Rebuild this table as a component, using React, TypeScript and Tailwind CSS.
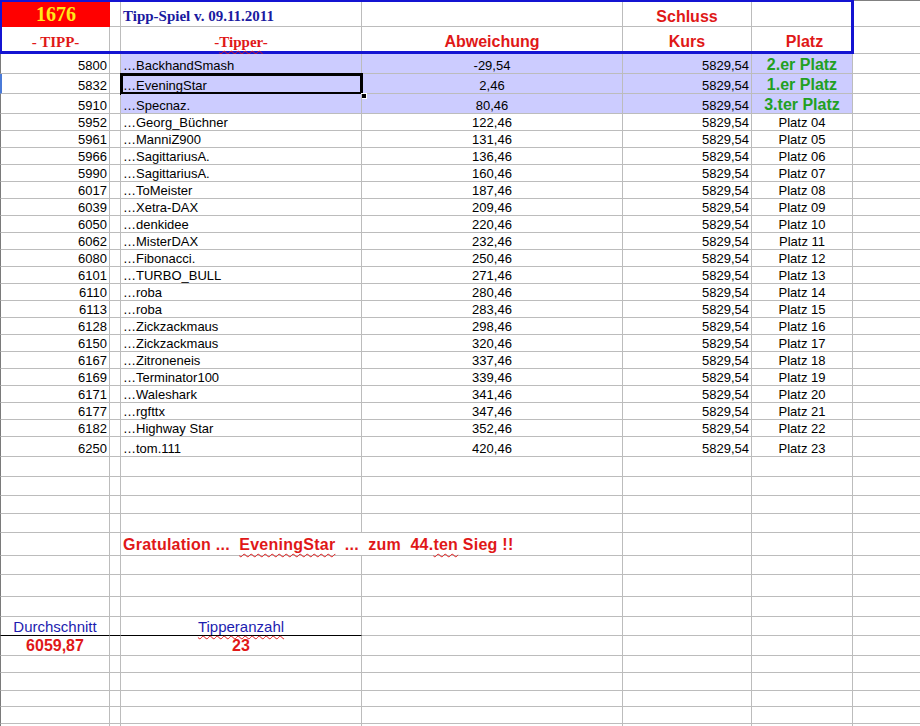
import React from "react";

const SANS = "font-['Liberation_Sans',Arial,sans-serif]";
const SERIF = "font-['Liberation_Serif','Times_New_Roman',serif]";

const tipps: [number, string, string][] = [
  [5800, "BackhandSmash", "-29,54"],
  [5832, "EveningStar", "2,46"],
  [5910, "Specnaz.", "80,46"],
  [5952, "Georg_Büchner", "122,46"],
  [5961, "ManniZ900", "131,46"],
  [5966, "SagittariusA.", "136,46"],
  [5990, "SagittariusA.", "160,46"],
  [6017, "ToMeister", "187,46"],
  [6039, "Xetra-DAX", "209,46"],
  [6050, "denkidee", "220,46"],
  [6062, "MisterDAX", "232,46"],
  [6080, "Fibonacci.", "250,46"],
  [6101, "TURBO_BULL", "271,46"],
  [6110, "roba", "280,46"],
  [6113, "roba", "283,46"],
  [6128, "Zickzackmaus", "298,46"],
  [6150, "Zickzackmaus", "320,46"],
  [6167, "Zitroneneis", "337,46"],
  [6169, "Terminator100", "339,46"],
  [6171, "Waleshark", "341,46"],
  [6177, "rgfttx", "347,46"],
  [6182, "Highway Star", "352,46"],
  [6250, "tom.111", "420,46"],
];

const winners = ["2.er Platz", "1.er Platz", "3.ter Platz"];

const Cell = ({
  w,
  className = "",
  children,
}: {
  w: string;
  className?: string;
  children?: React.ReactNode;
}) => (
  <div
    className={`${w} h-full shrink-0 border-r border-b border-[#bcbcbc] flex items-end whitespace-nowrap ${className}`}
  >
    {children}
  </div>
);

const EmptyRow = ({ h }: { h: string }) => (
  <div className={`flex ${h}`}>
    <Cell w="w-[110px]" className="border-l border-l-[#7a7a7a]" />
    <Cell w="w-[11px]" />
    <Cell w="w-[241px]" />
    <Cell w="w-[261px]" />
    <Cell w="w-[129px]" />
    <Cell w="w-[101px]" />
    <div className="flex-1 h-full border-b border-[#bcbcbc]" />
  </div>
);

const wavy = "underline decoration-wavy decoration-[#e01818] decoration-1 underline-offset-[3px]";

export default function App() {
  return (
    <div className={`w-[920px] h-[726px] overflow-hidden bg-white text-black ${SANS}`}>
      {/* Header block with blue frame */}
      <div className="flex h-[54px]">
        <div className="w-[854px] h-full shrink-0 border-t-2 border-l-2 border-r-[3px] border-b-[3px] border-[#1414d2] flex flex-col">
          <div className="flex h-[25px]">
            <div className="w-[108px] h-full shrink-0 bg-[#ff0000] flex items-center justify-center pb-[1px]">
              <span className={`${SERIF} font-bold text-[20px] leading-none text-[#ffe81a]`}>1676</span>
            </div>
            <Cell w="w-[11px]" />
            <Cell w="w-[241px]" className="pl-[2px] pb-[1px]">
              <span className={`${SERIF} font-bold text-[15px] leading-[18px] text-[#1a1aa0]`}>
                Tipp-Spiel v. 09.11.2011
              </span>
            </Cell>
            <Cell w="w-[261px]" />
            <Cell w="w-[129px]" className="justify-center">
              <span className="font-bold text-[16px] leading-[18px] text-[#e01818]">Schluss</span>
            </Cell>
            <div className="flex-1 h-full border-b border-[#bcbcbc]" />
          </div>
          <div className="flex flex-1">
            <div className="w-[108px] h-full shrink-0 border-r border-[#bcbcbc] flex items-end justify-center">
              <span className={`${SERIF} font-bold text-[15px] leading-[18px] text-[#e01818]`}>- TIPP-</span>
            </div>
            <div className="w-[11px] h-full shrink-0 border-r border-[#bcbcbc]" />
            <div className="w-[241px] h-full shrink-0 border-r border-[#bcbcbc] flex items-end justify-center">
              <span className={`${SERIF} font-bold text-[15px] leading-[18px] text-[#e01818]`}>
                -<span className={wavy}>Tipper</span>-
              </span>
            </div>
            <div className="w-[261px] h-full shrink-0 border-r border-[#bcbcbc] flex items-end justify-center">
              <span className="font-bold text-[16px] leading-[18px] text-[#e01818]">Abweichung</span>
            </div>
            <div className="w-[129px] h-full shrink-0 border-r border-[#bcbcbc] flex items-end justify-center">
              <span className="font-bold text-[16px] leading-[18px] text-[#e01818]">Kurs</span>
            </div>
            <div className="flex-1 h-full flex items-end justify-center pl-[6px]">
              <span className="font-bold text-[16px] leading-[18px] text-[#e01818]">Platz</span>
            </div>
          </div>
        </div>
        <div className="flex-1 flex flex-col border-t border-[#808080]">
          <div className="h-[26px] border-b border-[#bcbcbc]" />
          <div className="flex-1 border-b border-[#bcbcbc]" />
        </div>
      </div>

      {/* Tipp rows */}
      {tipps.map(([tipp, name, diff], i) => {
        const hl = i < 3;
        const h = i < 3 || i === 22 ? "h-[20px]" : "h-[17px]";
        const bg = hl ? "bg-[#ccccff]" : "";
        return (
          <div key={i} className={`flex ${h} text-[13px] leading-[14px]`}>
            <Cell
              w="w-[110px]"
              className={`justify-end pr-[2px] ${i === 1 ? "border-l-2 border-l-[#4a7ad8]" : "border-l border-l-[#7a7a7a]"}`}
            >
              {tipp}
            </Cell>
            <Cell w="w-[11px]" />
            <Cell w="w-[241px]" className={`relative pl-[2px] ${bg}`}>
              …{name}
              {i === 1 && (
                <>
                  <div className="absolute -left-[1px] -top-[1px] w-[243px] h-[22px] border-[3px] border-black" />
                  <div className="absolute left-[240px] top-[19px] w-[6px] h-[6px] bg-black border border-white" />
                </>
              )}
            </Cell>
            <Cell w="w-[261px]" className={`justify-center ${bg}`}>
              {diff}
            </Cell>
            <Cell w="w-[129px]" className={`justify-end pr-[2px] ${bg}`}>
              5829,54
            </Cell>
            <Cell w="w-[101px]" className={`justify-center ${bg}`}>
              {hl ? (
                <span className="font-bold text-[16px] leading-[17px] text-[#22a022]">{winners[i]}</span>
              ) : (
                <span>Platz {String(i + 1).padStart(2, "0")}</span>
              )}
            </Cell>
            <div className="flex-1 h-full border-b border-[#bcbcbc]" />
          </div>
        );
      })}

      <EmptyRow h="h-[20px]" />
      <EmptyRow h="h-[19px]" />
      <EmptyRow h="h-[18px]" />
      <EmptyRow h="h-[19px]" />

      {/* Gratulation */}
      <div className="flex h-[23px]">
        <Cell w="w-[110px]" className="border-l border-l-[#7a7a7a]" />
        <Cell w="w-[11px]" />
        <Cell w="w-[502px]" className="pl-[2px] pb-[1px] whitespace-pre">
          <span className="font-bold text-[16px] leading-[19px] tracking-[0.25px] text-[#e01818]">
            Gratulation ...  <span className={wavy}>EveningStar</span>  ...  zum  44.<span className={wavy}>ten</span> Sieg !!
          </span>
        </Cell>
        <Cell w="w-[129px]" />
        <Cell w="w-[101px]" />
        <div className="flex-1 h-full border-b border-[#bcbcbc]" />
      </div>

      <EmptyRow h="h-[19px]" />
      <EmptyRow h="h-[22px]" />
      <EmptyRow h="h-[20px]" />

      {/* Durchschnitt / Tipperanzahl */}
      <div className="flex h-[19px] text-[15px] leading-[17px] text-[#1c1cb0]">
        <Cell w="w-[110px]" className="justify-center border-l border-l-[#7a7a7a] border-b-black">
          Durchschnitt
        </Cell>
        <Cell w="w-[11px]" className="border-b-black" />
        <Cell w="w-[241px]" className="justify-center border-b-black">
          <span className={wavy}>Tipperanzahl</span>
        </Cell>
        <Cell w="w-[261px]" />
        <Cell w="w-[129px]" />
        <Cell w="w-[101px]" />
        <div className="flex-1 h-full border-b border-[#bcbcbc]" />
      </div>
      <div className="flex h-[20px] font-bold text-[16px] leading-[19px] text-[#e01818]">
        <Cell w="w-[110px]" className="justify-center border-l border-l-[#7a7a7a]">
          6059,87
        </Cell>
        <Cell w="w-[11px]" />
        <Cell w="w-[241px]" className="justify-center">
          23
        </Cell>
        <Cell w="w-[261px]" />
        <Cell w="w-[129px]" />
        <Cell w="w-[101px]" />
        <div className="flex-1 h-full border-b border-[#bcbcbc]" />
      </div>

      <EmptyRow h="h-[17px]" />
      <EmptyRow h="h-[18px]" />
      <EmptyRow h="h-[16px]" />
      <EmptyRow h="h-[17px]" />
      <EmptyRow h="h-[17px]" />
    </div>
  );
}
